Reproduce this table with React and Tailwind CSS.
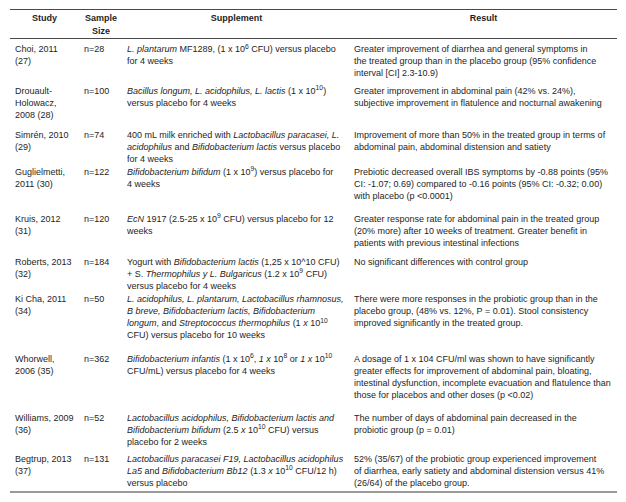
import React from "react";

const rows = [
  {
    h: "h-[46px]",
    pt: "pt-[4px]",
    study: ["Choi, 2011", "(27)"],
    n: "n=28",
    sup: [<><i>L. plantarum</i> MF1289, (1 x 10<sup>6</sup> CFU) versus placebo</>, "for 4 weeks"],
    res: ["Greater improvement of diarrhea and general symptoms in", "the treated group than in the placebo group (95% confidence", "interval [CI] 2.3-10.9)"],
  },
  {
    h: "h-[44px]",
    pt: "pt-0",
    study: ["Drouault-", "Holowacz,", "2008 (28)"],
    n: "n=100",
    sup: [<><i>Bacillus longum, L. acidophilus, L. lactis</i> (1 x 10<sup>10</sup>)</>, "versus placebo for 4 weeks"],
    res: ["Greater improvement in abdominal pain (42% vs. 24%),", "subjective improvement in flatulence and nocturnal awakening"],
  },
  {
    h: "h-[37px]",
    pt: "pt-0",
    study: ["Simrén, 2010", "(29)"],
    n: "n=74",
    sup: [<>400 mL milk enriched with <i>Lactobacillus paracasei, L.</i></>, <><i>acidophilus</i> and <i>Bifidobacterium lactis</i> versus placebo</>, "for 4 weeks"],
    res: ["Improvement of more than 50% in the treated group in terms of", "abdominal pain, abdominal distension and satiety"],
  },
  {
    h: "h-[47px]",
    pt: "pt-0",
    study: ["Guglielmetti,", "2011 (30)"],
    n: "n=122",
    sup: [<><i>Bifidobacterium bifidum</i> (1 x 10<sup>9</sup>) versus placebo for</>, "4 weeks"],
    res: ["Prebiotic decreased overall IBS symptoms by -0.88 points (95%", "CI: -1.07; 0.69) compared to -0.16 points (95% CI: -0.32; 0.00)", "with placebo (p <0.0001)"],
  },
  {
    h: "h-[43px]",
    pt: "pt-0",
    study: ["Kruis, 2012", "(31)"],
    n: "n=120",
    sup: [<><i>EcN</i> 1917 (2.5-25 x 10<sup>9</sup> CFU) versus placebo for 12</>, "weeks"],
    res: ["Greater response rate for abdominal pain in the treated group", "(20% more) after 10 weeks of treatment. Greater benefit in", "patients with previous intestinal infections"],
  },
  {
    h: "h-[37px]",
    pt: "pt-0",
    study: ["Roberts, 2013", "(32)"],
    n: "n=184",
    sup: [<>Yogurt with <i>Bifidobacterium lactis</i> (1,25 x 10^10 CFU)</>, <>+ S. <i>Thermophilus y L. Bulgaricus</i> (1.2 x 10<sup>9</sup> CFU)</>, "versus placebo for 4 weeks"],
    res: ["No significant differences with control group"],
  },
  {
    h: "h-[60px]",
    pt: "pt-0",
    study: ["Ki Cha, 2011", "(34)"],
    n: "n=50",
    sup: [<i>L. acidophilus, L. plantarum, Lactobacillus rhamnosus,</i>, <i>B breve, Bifidobacterium lactis, Bifidobacterium</i>, <><i>longum</i>, and <i>Streptococcus thermophilus</i> (1 <i>x</i> 10<sup>10</sup></>, "CFU) versus placebo for 10 weeks"],
    res: ["There were more responses in the probiotic group than in the", "placebo group, (48% vs. 12%, P = 0.01). Stool consistency", "improved significantly in the treated group."],
  },
  {
    h: "h-[59px]",
    pt: "pt-0",
    study: ["Whorwell,", "2006 (35)"],
    n: "n=362",
    sup: [<><i>Bifidobacterium infantis</i> (1 x 10<sup>6</sup>, <i>1 x</i> 10<sup>8</sup> or <i>1 x</i> 10<sup>10</sup></>, "CFU/mL) versus placebo for 4 weeks"],
    res: ["A dosage of 1 x 104 CFU/ml was shown to have significantly", "greater effects for improvement of abdominal pain, bloating,", "intestinal dysfunction, incomplete evacuation and flatulence than", "those for placebos and other doses (p <0.02)"],
  },
  {
    h: "h-[41px]",
    pt: "pt-0",
    study: ["Williams, 2009", "(36)"],
    n: "n=52",
    sup: [<i>Lactobacillus acidophilus, Bifidobacterium lactis and</i>, <><i>Bifidobacterium bifidum</i> (2.5 <i>x</i> 10<sup>10</sup> CFU) versus</>, "placebo for 2 weeks"],
    res: ["The number of days of abdominal pain decreased in the", "probiotic group (p = 0.01)"],
  },
  {
    h: "h-[39px]",
    pt: "pt-0",
    study: ["Begtrup, 2013", "(37)"],
    n: "n=131",
    sup: [<i>Lactobacillus paracasei F19, Lactobacillus acidophilus</i>, <><i>La5</i> and <i>Bifidobacterium Bb12</i> (1.3 <i>x</i> 10<sup>10</sup> CFU/12 h)</>, "versus placebo"],
    res: ["52% (35/67) of the probiotic group experienced improvement", "of diarrhea, early satiety and abdominal distension versus 41%", "(26/64) of the placebo group."],
  },
];

function Lines({ items }) {
  return (
    <div className="flex flex-col">
      {items.map((l, i) => (
        <div key={i} className="whitespace-nowrap">{l}</div>
      ))}
    </div>
  );
}

export default function App() {
  return (
    <div
      className="w-[626px] h-[502px] bg-white pt-[9px] pl-[10px] text-[#1e1e1e] text-[9px] leading-[12.2px]"
      style={{ fontFamily: '"Liberation Sans", Arial, sans-serif' }}
    >
      <table className="w-[607px] table-fixed border-collapse border-t border-t-[#4a4a4a] border-b-2 border-b-[#9a9a9a]">
        <colgroup>
          <col className="w-[69px]" />
          <col className="w-[44px]" />
          <col className="w-[227px]" />
          <col className="w-[267px]" />
        </colgroup>
        <thead>
          <tr className="h-[28px] border-b border-b-[#4a4a4a] leading-[13px]">
            <th className="align-top pt-[2px] font-bold text-center">Study</th>
            <th className="align-top pt-[2px] font-bold text-center">Sample<br />Size</th>
            <th className="align-top pt-[2px] font-bold text-center">Supplement</th>
            <th className="align-top pt-[2px] font-bold text-center">Result</th>
          </tr>
        </thead>
        <tbody>
          {rows.map((r, i) => (
            <tr key={i} className={r.h}>
              <td className={`align-top pl-[5px] ${r.pt}`}><Lines items={r.study} /></td>
              <td className={`align-top pl-[5px] ${r.pt}`}>{r.n}</td>
              <td className={`align-top pl-[4px] ${r.pt}`}><Lines items={r.sup} /></td>
              <td className={`align-top pl-[4px] ${r.pt}`}><Lines items={r.res} /></td>
            </tr>
          ))}
        </tbody>
      </table>
    </div>
  );
}
